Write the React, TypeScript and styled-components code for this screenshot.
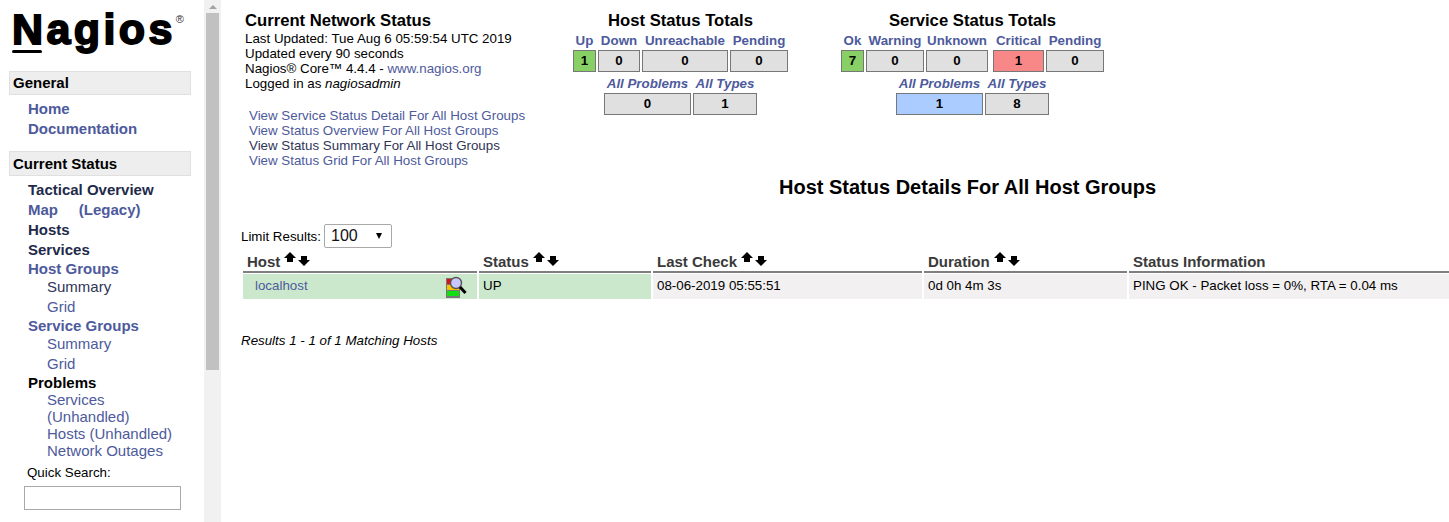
import React from "react";
import styled, { createGlobalStyle } from "styled-components";

const GlobalStyle = createGlobalStyle`
  html, body {
    margin: 0;
    padding: 0;
    height: 100%;
    overflow: hidden;
    background: #fff;
    font-family: "Liberation Sans", Arial, sans-serif;
    color: #000;
  }
`;

const LINK = "#4d5a9c";

const Page = styled.div`
  display: flex;
  width: 1449px;
  height: 522px;
  overflow: hidden;
`;

const Sidebar = styled.nav`
  width: 204px;
  flex: none;
  padding: 0 13px 0 9px;
  box-sizing: border-box;
`;

const Logo = styled.div`
  position: relative;
  height: 71px;
  padding: 4px 0 0 3px;
  box-sizing: border-box;
  font-size: 43px;
  font-weight: 700;
  line-height: 50px;
  letter-spacing: 3.4px;
  -webkit-text-stroke: 1.8px #000;
  white-space: nowrap;
  sup {
    font-size: 11px;
    font-weight: 400;
    -webkit-text-stroke: 0;
    color: #333;
    vertical-align: 21px;
    line-height: 0;
    letter-spacing: 0;
  }
`;

const LogoBar = styled.span`
  position: absolute;
  left: 3px;
  top: 50px;
  width: 30px;
  height: 3px;
  background: #000;
  border-radius: 2px;
`;

const SectionTitle = styled.div<{ $h: number }>`
  height: ${(p) => p.$h}px;
  border: 1px solid #e0e0e0;
  background: #eee;
  padding-left: 3px;
  font-size: 15px;
  font-weight: 700;
  line-height: ${(p) => p.$h - 2}px;
  box-sizing: border-box;
  width: 182px;
`;

const NavList = styled.div<{ $bottom: number }>`
  display: flex;
  flex-direction: column;
  padding: 4px 0 0 19px;
  margin-bottom: ${(p) => p.$bottom}px;
`;

const NavLink = styled.a<{ $dark?: boolean; $h?: number }>`
  display: block;
  height: ${(p) => p.$h ?? 20}px;
  font-size: 15px;
  font-weight: 700;
  line-height: 20px;
  color: ${(p) => (p.$dark ? "#222a4a" : LINK)};
  white-space: pre;
`;

const ProblemsLink = styled(NavLink)`
  color: #000;
`;

const SubLink = styled.a<{ $h?: number; $line?: number; $dark?: boolean }>`
  display: block;
  height: ${(p) => p.$h ?? 20}px;
  padding-left: 19px;
  font-size: 15px;
  line-height: ${(p) => p.$line ?? p.$h ?? 20}px;
  color: ${(p) => (p.$dark ? "#2f3557" : LINK)};
  white-space: nowrap;
`;

const SearchLabel = styled.div`
  margin: 6px 0 0 18px;
  font-size: 13.33px;
  line-height: 16px;
`;

const SearchInput = styled.input`
  display: block;
  width: 157px;
  height: 24px;
  margin: 5px 0 0 15px;
  border: 1px solid #a9a9a9;
  box-sizing: border-box;
  padding: 0;
  background: #fff;
`;

const Track = styled.div`
  width: 17px;
  flex: none;
  height: 100%;
  background: #f1f1f1;
  display: flex;
  flex-direction: column;
  align-items: center;
`;

const TrackArrow = styled.span`
  display: block;
  margin: 5px 0 4px;
  width: 0;
  height: 0;
  border-left: 4px solid transparent;
  border-right: 4px solid transparent;
  border-bottom: 4px solid #a3a3a3;
`;

const Thumb = styled.div`
  width: 13px;
  height: 357px;
  background: #c1c1c1;
`;

const Main = styled.main`
  flex: 1;
  min-width: 0;
  padding: 0 0 0 20px;
`;

const TopRow = styled.div`
  display: flex;
  height: 176px;
`;

const InfoBlock = styled.div`
  width: 332px;
  flex: none;
  padding: 11px 0 0 4px;
  box-sizing: border-box;
`;

const InfoTitle = styled.div`
  font-size: 16.67px;
  font-weight: 700;
  line-height: 20px;
`;

const InfoLine = styled.div`
  font-size: 13.33px;
  line-height: 15px;
  white-space: nowrap;
  a { color: ${LINK}; }
`;

const ViewLinks = styled.div`
  margin: 17px 0 0 4px;
`;

const ViewLink = styled.a<{ $dark?: boolean }>`
  display: block;
  font-size: 13.33px;
  line-height: 15px;
  white-space: nowrap;
  color: ${(p) => (p.$dark ? "#2f3557" : LINK)};
`;

const Totals = styled.div<{ $width: number; $gap: number }>`
  width: ${(p) => p.$width}px;
  margin-right: ${(p) => p.$gap}px;
  flex: none;
  padding-top: 11px;
  display: flex;
  flex-direction: column;
  align-items: center;
`;

const TotalsTitle = styled.div`
  font-size: 16.67px;
  font-weight: 700;
  line-height: 19px;
  white-space: nowrap;
`;

const TotalsRow = styled.div<{ $top: number }>`
  display: flex;
  gap: 2px;
  margin-top: ${(p) => p.$top}px;
`;

const Cell = styled.div<{ $w: number; $after?: number }>`
  width: ${(p) => p.$w}px;
  margin-right: ${(p) => p.$after ?? 0}px;
  display: flex;
  flex-direction: column;
  align-items: center;
`;

const CellLabel = styled.a<{ $italic?: boolean }>`
  font-size: 13.33px;
  font-weight: 700;
  font-style: ${(p) => (p.$italic ? "italic" : "normal")};
  line-height: 16px;
  height: 17px;
  color: ${LINK};
  white-space: nowrap;
`;

const CellValue = styled.div<{ $bg?: string }>`
  width: 100%;
  height: 22px;
  box-sizing: border-box;
  border: 1px solid #777;
  background: ${(p) => p.$bg ?? "#e0e0e0"};
  font-size: 13.33px;
  font-weight: 700;
  line-height: 20px;
  text-align: center;
`;

const PageTitle = styled.h1`
  margin: 0;
  height: 48px;
  padding-left: 538px;
  font-size: 20px;
  font-weight: 700;
  line-height: 22px;
  white-space: nowrap;
`;

const LimitRow = styled.div`
  display: flex;
  align-items: center;
  height: 24px;
  font-size: 13.33px;
`;

const SelectBox = styled.div`
  display: flex;
  align-items: center;
  justify-content: space-between;
  box-sizing: border-box;
  width: 68px;
  height: 24px;
  margin-left: 3px;
  padding: 0 9px 0 6px;
  border: 1px solid #a9a9a9;
  border-radius: 2px;
  font-size: 16px;
  color: #111;
`;

const SelectCaret = styled.span`
  width: 0;
  height: 0;
  border-left: 3.5px solid transparent;
  border-right: 3.5px solid transparent;
  border-top: 6px solid #000;
`;

const StatusGrid = styled.div`
  display: grid;
  grid-template-columns: 234px 172px 269px 203px 320px;
  column-gap: 2px;
  margin: 0 0 0 2px;
`;

const Heading = styled.div`
  display: flex;
  align-items: flex-end;
  height: 23px;
  padding: 0 0 0 4px;
  border-bottom: 2px solid #7f7f7f;
  font-size: 15px;
  font-weight: 700;
  line-height: 18px;
  color: #3a3a3a;
  white-space: nowrap;
`;

const SortIcons = styled.span`
  display: inline-flex;
  gap: 2px;
  margin: 4px 0 0 4px;
  align-self: flex-start;
`;

const ArrowSvg = styled.svg<{ $down?: boolean }>`
  display: block;
  margin-top: ${(p) => (p.$down ? 4 : 0)}px;
`;

const DataCell = styled.div<{ $bg: string; $pr?: number }>`
  display: flex;
  align-items: center;
  justify-content: space-between;
  margin-top: 1px;
  height: 25px;
  padding: 0 ${(p) => p.$pr ?? 4}px 2px 4px;
  box-sizing: border-box;
  background: ${(p) => p.$bg};
  font-size: 13.33px;
  white-space: nowrap;
`;

const HostLink = styled.a`
  margin-left: 8px;
  color: ${LINK};
`;

const DetailIconSvg = styled.svg`
  flex: none;
  margin-bottom: -2px;
`;

const ResultNote = styled.div`
  margin: 34px 0 0 0;
  font-size: 13.33px;
  line-height: 15px;
  font-style: italic;
`;

const SortArrow = ({ down }: { down?: boolean }) => (
  <ArrowSvg $down={down} width="12" height="10" viewBox="0 0 12 10">
    <path
      d="M6 0 L12 6 L9 6 L9 10 L3 10 L3 6 L0 6 Z"
      fill="#000"
      transform={down ? "rotate(180 6 5)" : undefined}
    />
  </ArrowSvg>
);

const HostDetailIcon = () => (
  <DetailIconSvg width="21" height="22" viewBox="0 0 21 22">
    <rect x="0" y="2" width="14" height="20" fill="#777" />
    <rect x="1" y="3" width="12" height="5" fill="#e01010" />
    <rect x="1" y="9" width="12" height="5" fill="#f5c400" />
    <rect x="1" y="15" width="12" height="5" fill="#10e010" />
    <circle cx="10" cy="7" r="5.5" fill="#c8c8ff" stroke="#555" strokeWidth="1.4" />
    <path d="M14 11 L19.5 17" stroke="#000" strokeWidth="3" />
  </DetailIconSvg>
);

const Sortable = ({ label }: { label: string }) => (
  <Heading>
    {label}
    <SortIcons>
      <SortArrow />
      <SortArrow down />
    </SortIcons>
  </Heading>
);

type TotalCell = { label: string; w: number; value: string; bg?: string; after?: number };

const hostCells: TotalCell[] = [
  { label: "Up", w: 23, value: "1", bg: "#88d066" },
  { label: "Down", w: 42, value: "0" },
  { label: "Unreachable", w: 86, value: "0" },
  { label: "Pending", w: 58, value: "0" },
];

const serviceCells: TotalCell[] = [
  { label: "Ok", w: 23, value: "7", bg: "#88d066" },
  { label: "Warning", w: 58, value: "0" },
  { label: "Unknown", w: 62, value: "0", after: 3 },
  { label: "Critical", w: 51, value: "1", bg: "#f88888" },
  { label: "Pending", w: 58, value: "0" },
];

const TotalsBlock = ({
  title,
  width,
  gap,
  cells,
  summary,
}: {
  title: string;
  width: number;
  gap: number;
  cells: TotalCell[];
  summary: TotalCell[];
}) => (
  <Totals $width={width} $gap={gap}>
    <TotalsTitle>{title}</TotalsTitle>
    <TotalsRow $top={3}>
      {cells.map((c) => (
        <Cell key={c.label} $w={c.w} $after={c.after}>
          <CellLabel>{c.label}</CellLabel>
          <CellValue $bg={c.bg}>{c.value}</CellValue>
        </Cell>
      ))}
    </TotalsRow>
    <TotalsRow $top={4}>
      {summary.map((c) => (
        <Cell key={c.label} $w={c.w}>
          <CellLabel $italic>{c.label}</CellLabel>
          <CellValue $bg={c.bg}>{c.value}</CellValue>
        </Cell>
      ))}
    </TotalsRow>
  </Totals>
);

export default function App() {
  return (
    <>
      <GlobalStyle />
      <Page>
        <Sidebar>
          <Logo>
            Nagios<sup>®</sup>
            <LogoBar />
          </Logo>
          <SectionTitle $h={24}>General</SectionTitle>
          <NavList $bottom={12}>
            <NavLink>Home</NavLink>
            <NavLink>Documentation</NavLink>
          </NavList>
          <SectionTitle $h={25}>Current Status</SectionTitle>
          <NavList $bottom={0}>
            <NavLink $dark>Tactical Overview</NavLink>
            <NavLink>Map     (Legacy)</NavLink>
            <NavLink $dark>Hosts</NavLink>
            <NavLink $dark $h={19}>Services</NavLink>
            <NavLink $h={19}>Host Groups</NavLink>
            <SubLink $dark $h={19} $line={18}>Summary</SubLink>
            <SubLink $h={19} $line={20}>Grid</SubLink>
            <NavLink $h={19}>Service Groups</NavLink>
            <SubLink $h={19} $line={18}>Summary</SubLink>
            <SubLink $h={19} $line={20}>Grid</SubLink>
            <ProblemsLink $h={18}>Problems</ProblemsLink>
            <SubLink $h={17}>Services</SubLink>
            <SubLink $h={17}>(Unhandled)</SubLink>
            <SubLink $h={17}>Hosts (Unhandled)</SubLink>
            <SubLink $h={17}>Network Outages</SubLink>
          </NavList>
          <SearchLabel>Quick Search:</SearchLabel>
          <SearchInput />
        </Sidebar>
        <Track>
          <TrackArrow />
          <Thumb />
        </Track>
        <Main>
          <TopRow>
            <InfoBlock>
              <InfoTitle>Current Network Status</InfoTitle>
              <InfoLine>Last Updated: Tue Aug 6 05:59:54 UTC 2019</InfoLine>
              <InfoLine>Updated every 90 seconds</InfoLine>
              <InfoLine>
                Nagios® Core™ 4.4.4 - <a>www.nagios.org</a>
              </InfoLine>
              <InfoLine>
                Logged in as <i>nagiosadmin</i>
              </InfoLine>
              <ViewLinks>
                <ViewLink>View Service Status Detail For All Host Groups</ViewLink>
                <ViewLink>View Status Overview For All Host Groups</ViewLink>
                <ViewLink $dark>View Status Summary For All Host Groups</ViewLink>
                <ViewLink>View Status Grid For All Host Groups</ViewLink>
              </ViewLinks>
            </InfoBlock>
            <TotalsBlock
              title="Host Status Totals"
              width={215}
              gap={53}
              cells={hostCells}
              summary={[
                { label: "All Problems", w: 87, value: "0" },
                { label: "All Types", w: 64, value: "1" },
              ]}
            />
            <TotalsBlock
              title="Service Status Totals"
              width={263}
              gap={0}
              cells={serviceCells}
              summary={[
                { label: "All Problems", w: 87, value: "1", bg: "#aaccff" },
                { label: "All Types", w: 64, value: "8" },
              ]}
            />
          </TopRow>
          <PageTitle>Host Status Details For All Host Groups</PageTitle>
          <LimitRow>
            Limit Results:
            <SelectBox>
              100
              <SelectCaret />
            </SelectBox>
          </LimitRow>
          <StatusGrid>
            <Sortable label="Host" />
            <Sortable label="Status" />
            <Sortable label="Last Check" />
            <Sortable label="Duration" />
            <Heading>Status Information</Heading>
            <DataCell $bg="#cce8cc" $pr={10}>
              <HostLink>localhost</HostLink>
              <HostDetailIcon />
            </DataCell>
            <DataCell $bg="#cce8cc">UP</DataCell>
            <DataCell $bg="#f2f0f0">08-06-2019 05:55:51</DataCell>
            <DataCell $bg="#f2f0f0">0d 0h 4m 3s</DataCell>
            <DataCell $bg="#f2f0f0">PING OK - Packet loss = 0%, RTA = 0.04 ms</DataCell>
          </StatusGrid>
          <ResultNote>Results 1 - 1 of 1 Matching Hosts</ResultNote>
        </Main>
      </Page>
    </>
  );
}
